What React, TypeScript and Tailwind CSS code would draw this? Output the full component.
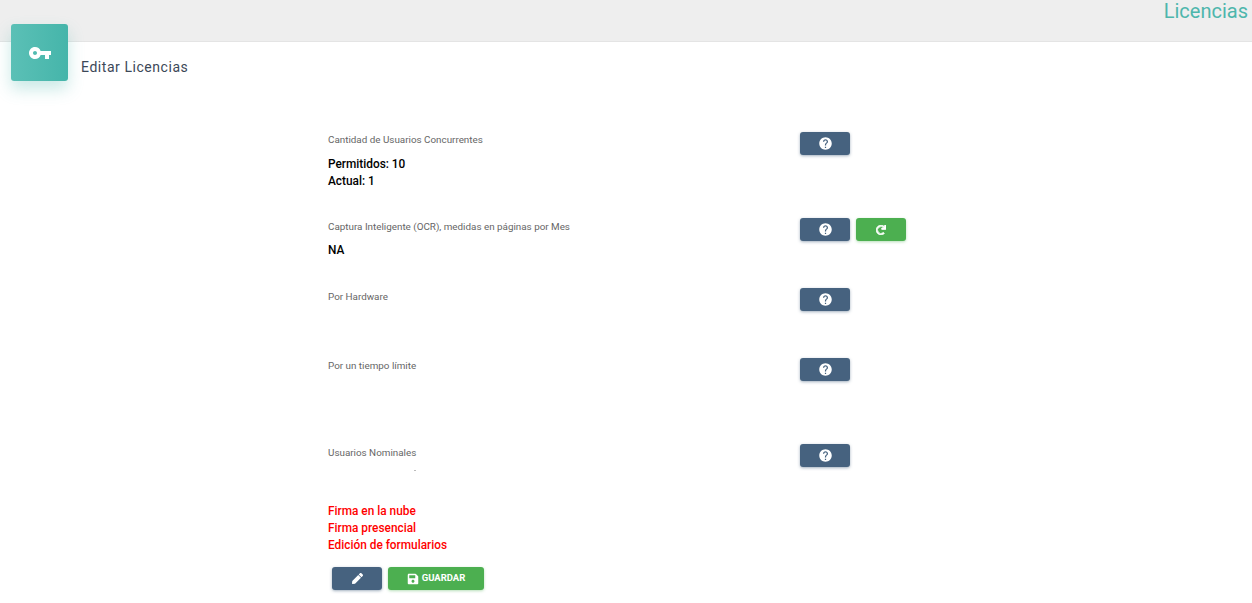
import { MdVpnKey, MdHelp } from 'react-icons/md';
import { FaSave, FaRedo, FaPen } from 'react-icons/fa';

const blueBtn =
  'flex h-[23px] w-[50px] items-center justify-center rounded-[3px] bg-[#46627f] text-white shadow-[0_1px_3px_rgba(70,98,127,0.5)]';
const greenBtn =
  'flex h-[23px] items-center justify-center rounded-[3px] bg-[#4caf50] text-white shadow-[0_1px_3px_rgba(76,175,80,0.4)]';

function HelpButton() {
  return (
    <button className={blueBtn}>
      <MdHelp size={15} />
    </button>
  );
}

function Row({
  label,
  height,
  labelTop = 'pt-[3px]',
  action,
  children,
}: {
  label: string;
  height: string;
  labelTop?: string;
  action?: React.ReactNode;
  children?: React.ReactNode;
}) {
  return (
    <div className={`flex ${height}`}>
      <div className="w-[472px]">
        <p className={`${labelTop} text-[9.85px] leading-[12px] text-[#666]`}>{label}</p>
        {children}
      </div>
      <div className="flex gap-[6px]">
        <HelpButton />
        {action}
      </div>
    </div>
  );
}

export default function App() {
  return (
    <div className="relative h-[603px] overflow-hidden bg-white font-['Roboto',sans-serif]">
      <header className="flex h-[42px] items-start justify-end border-b border-[#e4e4e4] bg-[#eeeeee] pr-[4px]">
        <h1 className="text-[20px] leading-[22px] text-[#4db6ac]">Licencias</h1>
      </header>

      <div className="absolute left-[11px] top-[24px] flex h-[57px] w-[57px] items-center justify-center rounded-[3px] bg-gradient-to-l from-[#45b5aa] to-[#5bc0b6] text-white shadow-[0_8px_16px_rgba(77,182,172,0.3)]">
        <MdVpnKey size={24} />
      </div>

      <div className="pl-[81px] pt-[15px]">
        <h2 className="text-[14px] leading-[20px] tracking-[0.55px] text-[#3c4858]">Editar Licencias</h2>
      </div>

      <main className="pl-[328px] pt-[55px]">
        <Row label="Cantidad de Usuarios Concurrentes" height="h-[86px]" labelTop="pt-[2px]">
          <div className="mt-[10px] text-[11.85px] font-medium leading-[17px] text-black">
            <p>Permitidos: 10</p>
            <p>Actual: 1</p>
          </div>
        </Row>
        <Row
          label="Captura Inteligente (OCR), medidas en páginas por Mes"
          height="h-[70px]"
          action={
            <button className={`${greenBtn} w-[50px]`}>
              <FaRedo size={10} stroke="currentColor" strokeWidth={40} />
            </button>
          }
        >
          <p className="mt-[9px] text-[11.85px] font-medium leading-[17px] text-black">NA</p>
        </Row>
        <Row label="Por Hardware" height="h-[70px]" />
        <Row label="Por un tiempo límite" height="h-[86px]" labelTop="pt-[2px]" />
        <Row label="Usuarios Nominales" height="h-[59px]">
          <div className="ml-[86px] mt-[11px] h-px w-[2px] bg-[#bbb]" />
        </Row>

        <div className="text-[11.85px] font-medium leading-[17px] text-[#ff0000]">
          <p>Firma en la nube</p>
          <p>Firma presencial</p>
          <p>Edición de formularios</p>
        </div>

        <div className="mt-[13px] flex gap-[6px] pl-[4px]">
          <button className={blueBtn}>
            <FaPen size={11} />
          </button>
          <button className={`${greenBtn} w-[96px] gap-[3px] text-[9.5px] font-bold`}>
            <FaSave size={12} />
            GUARDAR
          </button>
        </div>
      </main>
    </div>
  );
}
